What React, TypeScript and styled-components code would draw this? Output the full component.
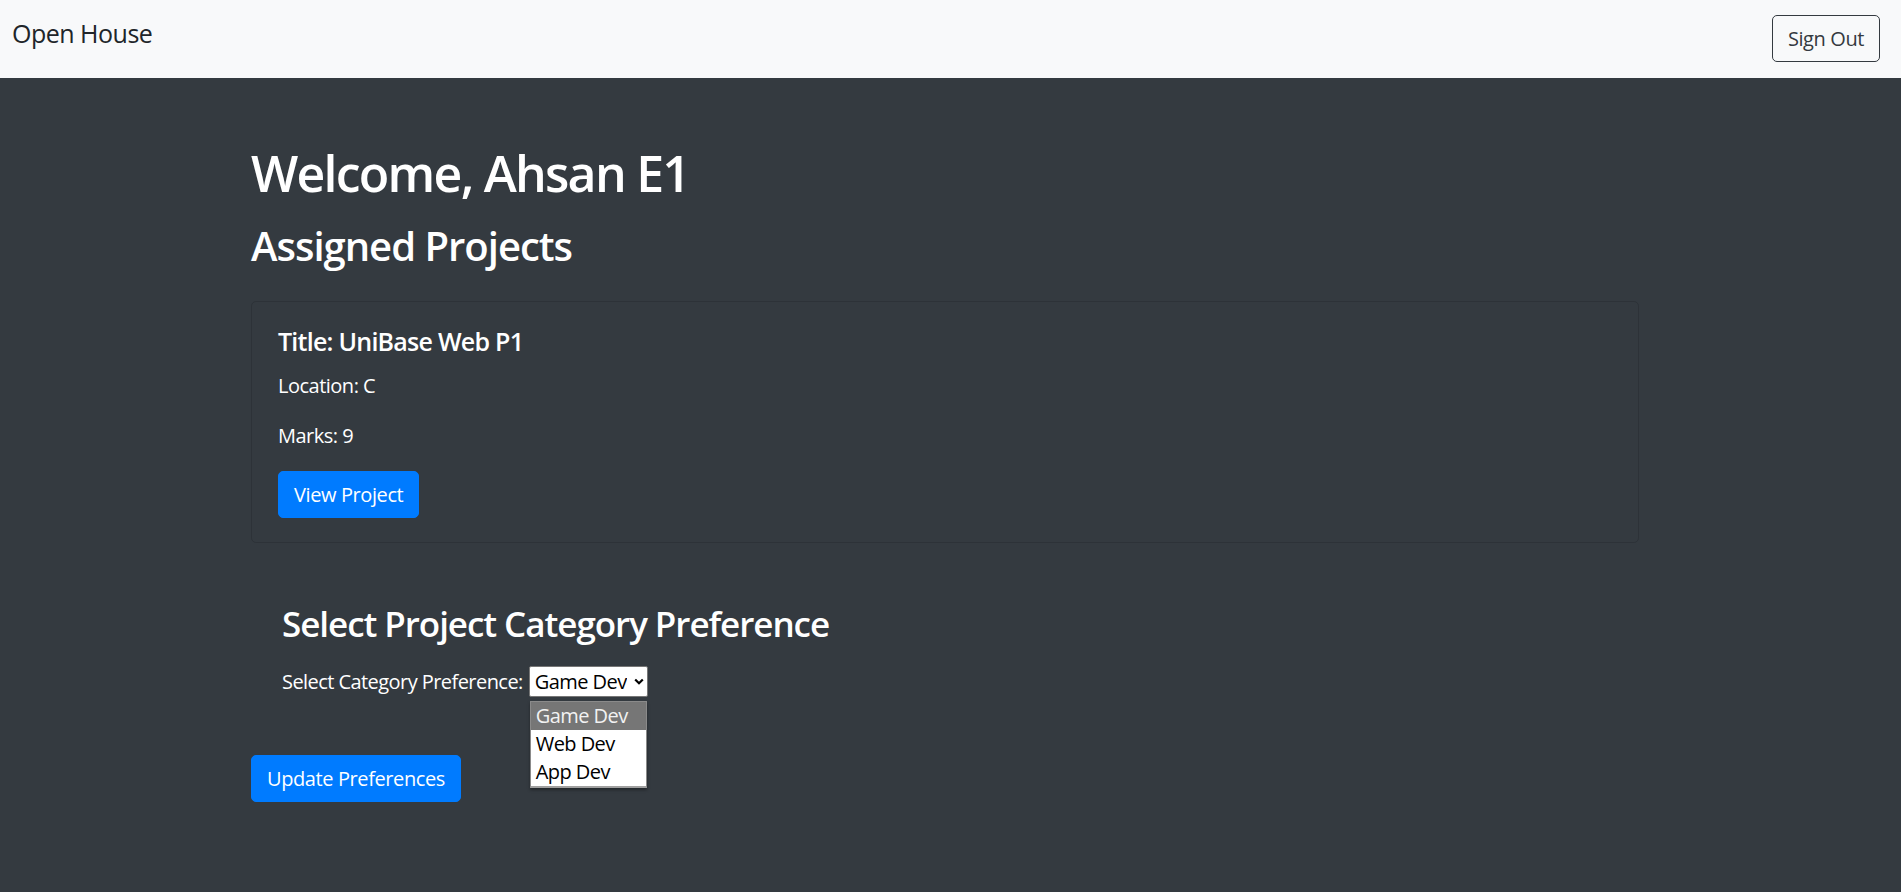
import styled, { createGlobalStyle } from 'styled-components';

const GlobalStyle = createGlobalStyle`
    html,
    body {
        margin: 0;
        padding: 0;
        background-color: #343a40;
        min-height: 100%;
    }

    body {
        font-family: 'Segoe UI', 'Open Sans', 'Noto Sans', sans-serif;
        font-size: 20px;
        line-height: 1.5;
        color: #fff;
    }

    * {
        box-sizing: border-box;
    }
`;

const StyledNavbar = styled.nav`
    display: flex;
    justify-content: space-between;
    align-items: flex-start;
    height: 78px;
    padding: 15px 21px 0 12px;
    background-color: #f8f9fa;
`;

const StyledBrand = styled.span`
    font-size: 25px;
    line-height: 37px;
    font-weight: 500;
    color: #212529;
    letter-spacing: -0.02em;
`;

const StyledButton = styled.button<{ $variant?: 'primary' | 'outline' }>`
    font-family: inherit;
    font-size: 20px;
    line-height: 30px;
    padding: 7.5px 15px;
    border-radius: 5px;
    cursor: pointer;
    letter-spacing: -0.02em;
    border: 1px solid ${({ $variant }) => ($variant === 'outline' ? '#343a40' : '#007bff')};
    background-color: ${({ $variant }) => ($variant === 'outline' ? 'transparent' : '#007bff')};
    color: ${({ $variant }) => ($variant === 'outline' ? '#343a40' : '#fff')};
`;

const StyledMain = styled.main`
    width: 1388px;
    margin-left: 251px;
    padding-top: 65px;
    padding-bottom: 40px;
`;

const StyledTitle = styled.h1`
    margin: 0 0 19px;
    font-size: 50px;
    line-height: 60px;
    font-weight: 600;
    letter-spacing: -0.035em;
`;

const StyledSubtitle = styled.h2`
    margin: 0 0 31px;
    font-size: 40px;
    line-height: 48px;
    font-weight: 600;
    letter-spacing: -0.025em;
`;

const StyledCard = styled.div`
    border: 1px solid rgba(0, 0, 0, 0.125);
    border-radius: 5px;
    padding: 24px 26px;
`;

const StyledCardTitle = styled.h5`
    margin: 0 0 15px;
    font-size: 25px;
    line-height: 30px;
    font-weight: 600;
    letter-spacing: -0.03em;
`;

const StyledCardText = styled.p`
    margin: 0 0 20px;
    letter-spacing: -0.025em;
`;

const StyledPreferenceSection = styled.section`
    padding: 0 31px;
    margin-top: 60px;
`;

const StyledSectionTitle = styled.h3`
    margin: 0;
    font-size: 35px;
    line-height: 42px;
    font-weight: 600;
    letter-spacing: -0.03em;
`;

const StyledFieldRow = styled.div`
    display: flex;
    align-items: baseline;
    gap: 6px;
    margin-top: 21px;
`;

const StyledLabel = styled.label`
    letter-spacing: -0.028em;
`;

const StyledSelectWrap = styled.span`
    position: relative;
    display: inline-block;
`;

const StyledSelect = styled.select`
    appearance: none;
    height: 31px;
    padding: 0 20px 0 5px;
    font-family: inherit;
    font-size: 20px;
    letter-spacing: -0.028em;
    color: #000;
    background-color: #fff;
    border: 1px solid #767676;
    border-radius: 2px;
`;

const StyledChevron = styled.svg`
    position: absolute;
    right: 4px;
    top: 12px;
    pointer-events: none;
`;

const StyledListbox = styled.ul`
    position: absolute;
    top: 35px;
    left: 1px;
    width: 117px;
    margin: 0;
    padding: 0;
    list-style: none;
    background-color: #fff;
    border: 1px solid #8a8a8a;
    border-bottom: 2px solid #a0a0a0;
    box-shadow: 0 2px 3px rgba(0, 0, 0, 0.35);
    z-index: 2;
`;

const StyledOption = styled.li<{ $active?: boolean }>`
    height: 28px;
    padding-left: 5px;
    font-size: 20px;
    line-height: 28px;
    letter-spacing: -0.028em;
    color: ${({ $active }) => ($active ? '#f2f2f2' : '#000')};
    background-color: ${({ $active }) => ($active ? '#767676' : '#fff')};
`;

const StyledUpdateRow = styled.div`
    margin-top: 58px;
`;

const categories = ['Game Dev', 'Web Dev', 'App Dev'];

const App = () => (
    <>
        <GlobalStyle />
        <StyledNavbar>
            <StyledBrand>Open House</StyledBrand>
            <StyledButton $variant="outline">Sign Out</StyledButton>
        </StyledNavbar>
        <StyledMain>
            <StyledTitle>Welcome, Ahsan E1</StyledTitle>
            <StyledSubtitle>Assigned Projects</StyledSubtitle>
            <StyledCard>
                <StyledCardTitle>Title: UniBase Web P1</StyledCardTitle>
                <StyledCardText>Location: C</StyledCardText>
                <StyledCardText>Marks: 9</StyledCardText>
                <StyledButton>View Project</StyledButton>
            </StyledCard>
            <StyledPreferenceSection>
                <StyledSectionTitle>Select Project Category Preference</StyledSectionTitle>
                <StyledFieldRow>
                    <StyledLabel htmlFor="category">Select Category Preference:</StyledLabel>
                    <StyledSelectWrap>
                        <StyledSelect id="category" defaultValue="Game Dev">
                            {categories.map(category => (
                                <option key={category}>{category}</option>
                            ))}
                        </StyledSelect>
                        <StyledChevron width="10" height="7" viewBox="0 0 10 7">
                            <path d="M1.2 1.5l3.8 3.8 3.8-3.8" fill="none" stroke="#000" strokeWidth="2.2" />
                        </StyledChevron>
                        <StyledListbox>
                            {categories.map((category, index) => (
                                <StyledOption key={category} $active={index === 0}>
                                    {category}
                                </StyledOption>
                            ))}
                        </StyledListbox>
                    </StyledSelectWrap>
                </StyledFieldRow>
            </StyledPreferenceSection>
            <StyledUpdateRow>
                <StyledButton>Update Preferences</StyledButton>
            </StyledUpdateRow>
        </StyledMain>
    </>
);

export default App;
